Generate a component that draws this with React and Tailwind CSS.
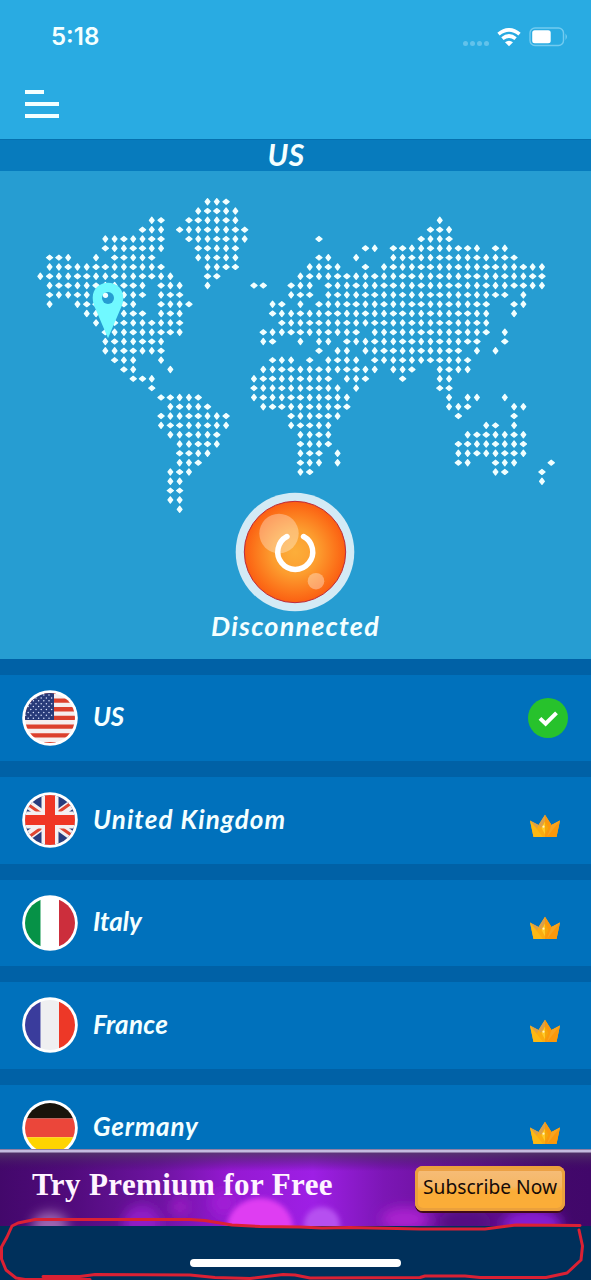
import React from "react";

// Each row lists the columns, or spans of columns, that hold a dot.
const MAP_ROWS = [
  "18-20", "17-21", "12-13 16-21 43", "11-13 15-22 42-44", "7-13 16-22 30 41-44",
  "7-13 17-21 35-36 38-47 49-50", "1-3 6 8-12 17-21 30-31 34 38-51",
  "1-13 18-21 29-32 35 37-54", "0-14 18-19 28-54", "1-11 13-15 18 23-24 27-29 31-54",
  "1-11 13-15 27-29 31-50 52", "1 4-10 13-16 25-26 28 30-48 51-52",
  "5-11 13-15 25-48 51", "6-15 26-48", "7-15 24-34 36-48 50",
  "7-13 24-25 28 30-31 33-47 50", "7-13 30 32-33 35-45 47 49",
  "8-10 13 25-27 29 31-34 36-46", "9-10 14 24-36 38-40 43-46",
  "10-12 23-31 33-35 39 43-44", "12 23-32 34 43-44", "13-17 23-33 44 46-47 50",
  "14-18 24-33 44-46 51-52", "13-20 27-32 45 51", "13-20 27-31 48-49 51",
  "14-19 28-31 46-52", "15-19 28-31 45-52", "15-18 28-30 32 45-52",
  "15-17 28-30 32 45-46 49-51 55", "14-16 28-29 49-50 54", "14-15 54", "14-15", "14-15", "15",
];

function dotPath() {
  let d = "";
  MAP_ROWS.forEach((row, r) => {
    row.split(" ").forEach((span) => {
      const [a, b = a] = span.split("-").map(Number);
      for (let c = a; c <= b; c++) {
        const x = (40.3 + c * 9.29).toFixed(2);
        const y = 30.7 + r * 9.32;
        const wide = (c * 5 + r * 3) % 7 < 3;
        d += wide
          ? `M${x} ${(y - 2.5).toFixed(2)}l3.1 2.5-3.1 2.5-3.1-2.5z`
          : `M${x} ${(y - 3.1).toFixed(2)}l2.4 3.1-2.4 3.1-2.4-3.1z`;
      }
    });
  });
  return d;
}

function WorldMap() {
  return (
    <svg className="block h-[488px] w-full" viewBox="0 0 591 488" aria-hidden="true">
      <path d={dotPath()} fill="#f1ffff" stroke="#f1ffff" strokeWidth="1.200" strokeLinejoin="round" />
      <path
        d="M108 111.800c-9 0-15.300 6.500-15.300 15 0 5 1.500 8.500 3.300 12.200L108 167.300 120 139c1.800-3.700 3.300-7.200 3.300-12.200 0-8.500-6.300-15-15.300-15z"
        fill="#70f9ff"
      />
      <circle cx="108" cy="127" r="6" fill="#269dd2" />
      <circle cx="105.500" cy="124.300" r="2.600" fill="#f1ffff" />
    </svg>
  );
}

function PowerButton() {
  return (
    <svg className="mr-px" width="120" height="120" viewBox="0 0 120 120" aria-hidden="true">
      <defs>
        <radialGradient id="orb">
          <stop offset="0" stopColor="#fcae3a" />
          <stop offset="0.45" stopColor="#fc9d2f" />
          <stop offset="0.8" stopColor="#fc761b" />
          <stop offset="1" stopColor="#fb5f12" />
        </radialGradient>
      </defs>
      <circle cx="60" cy="60" r="59.300" fill="#d3eaf5" />
      <circle cx="60" cy="60" r="50.700" fill="url(#orb)" stroke="#bb2c3e" strokeWidth="1" />
      <circle cx="44" cy="41.500" r="19.700" fill="#fff" fillOpacity="0.32" />
      <circle cx="81" cy="89.200" r="8.300" fill="#fff" fillOpacity="0.35" />
      <path d="M52 44.500a17.500 17.500 0 1 0 16.500 0" fill="none" stroke="#fff" strokeWidth="5.400" strokeLinecap="round" />
    </svg>
  );
}

function UsFlag() {
  const stars = [];
  for (let r = 0; r < 9; r++) {
    for (let c = 0; c < 6; c++) {
      stars.push(<circle key={`${r}-${c}`} cx={1 + c * 5.2 + (r % 2) * 2.6} cy={5 + r * 2.9} r="0.75" fill="#dbe4ff" />);
    }
  }
  return (
    <>
      <path d="M0 0h56v56H0z" fill="#f6eeee" />
      {[0, 1, 2, 3, 4, 5, 6].map((i) => (
        <path key={i} d={`M0 ${-0.3 + i * 8.7}h56v4.300H0z`} fill="#dc402d" />
      ))}
      <path d="M0 0h32v30H0z" fill="#283b79" />
      {stars}
    </>
  );
}

function UkFlag() {
  return (
    <>
      <path d="M0 0h56v56H0z" fill="#293d7d" />
      <path d="M-6 3.500 62 52.500M-6 52.500 62 3.500" stroke="#f4eff0" strokeWidth="9" />
      <path d="M27 30.500 4 47M29 25.500 52 9M28 28 4 11M28 28 52 45" stroke="#df4430" strokeWidth="3" />
      <path d="M28 0v56M0 28h56" stroke="#f4eff0" strokeWidth="17" />
      <path d="M28 0v56M0 28h56" stroke="#f03624" strokeWidth="10" />
    </>
  );
}

function Flag({ country }) {
  const clip = `clip-${country.replace(/\s/g, "")}`;
  return (
    <svg className="shrink-0" width="56" height="56" viewBox="0 0 56 56" aria-hidden="true">
      <defs>
        <clipPath id={clip}><circle cx="28" cy="28" r="25" /></clipPath>
      </defs>
      <circle cx="28" cy="28" r="27.800" fill="#fff" />
      <g clipPath={`url(#${clip})`}>
        {country === "US" && <UsFlag />}
        {country === "United Kingdom" && <UkFlag />}
        {country === "Italy" && (
          <>
            <path d="M0 0h18.700v56H0z" fill="#069247" />
            <path d="M18.700 0H37v56H18.700z" fill="#fff" />
            <path d="M37 0h19v56H37z" fill="#cc2e3c" />
          </>
        )}
        {country === "France" && (
          <>
            <path d="M0 0h18.700v56H0z" fill="#3a3c9c" />
            <path d="M18.700 0H37v56H18.700z" fill="#efeff1" />
            <path d="M37 0h19v56H37z" fill="#ed3827" />
          </>
        )}
        {country === "Germany" && (
          <>
            <path d="M0 0h56v18.400H0z" fill="#18140b" />
            <path d="M0 18.400h56v18.800H0z" fill="#eb463a" />
            <path d="M0 37.200h56V56H0z" fill="#ffd400" />
          </>
        )}
      </g>
    </svg>
  );
}

function Crown() {
  return (
    <svg className="mr-[6px] mt-[11px]" width="32" height="24" viewBox="0 0 32 24" aria-hidden="true">
      <path d="M1 6.500 9.500 11 16 .8 22.500 11 31 6.500 27.500 23h-23z" fill="#fbac10" />
      <path d="M1 6.500 14 23H4.500z" fill="#fdb913" />
      <path d="M16 .8 22.500 11 31 6.500 27.500 23H16z" fill="#fb980b" />
      <path d="M1 6.500 9.500 11 8 14.500zM9.500 11 16 .8V7l-4 7z" fill="#dba04a" />
      <path d="M31 6.500 18 23l4.500-12z" fill="#f6a421" />
      <path d="M16 7.500 19.500 14 16 20.500 12.500 14z" fill="#f5a60b" />
      <path d="M16 7.500V20.500L12.500 14z" fill="#ffc928" />
      <circle cx="14.500" cy="12.700" r="1.100" fill="#fff2c4" />
    </svg>
  );
}

function Check() {
  return (
    <svg className="-mr-px" width="40" height="40" viewBox="0 0 40 40" aria-hidden="true">
      <circle cx="20" cy="20" r="20" fill="#27c22c" />
      <path d="m12 20.400 5.600 5.300L28.500 14.800" fill="none" stroke="#fff" strokeWidth="4" />
    </svg>
  );
}

const SERVERS = [
  { name: "US", track: "tracking-[-0.2px]" },
  { name: "United Kingdom", track: "tracking-[1.1px]" },
  { name: "Italy", track: "tracking-[0px]" },
  { name: "France", track: "tracking-[0.35px]" },
  { name: "Germany", track: "tracking-[0.8px]" },
];

export default function App() {
  return (
    <div className="relative flex h-[1280px] w-[591px] flex-col overflow-hidden bg-[#0061a6] font-['Lato',sans-serif] text-[#f4ffff]">
      <header className="h-[139px] shrink-0 bg-[#29abe2]">
        <div className="flex h-[74px] items-center justify-between pl-[51px] pr-[23px]">
          <time className="font-['Inter',sans-serif] text-[24px] font-semibold leading-none tracking-[0px]">5:18</time>
          <div className="flex items-center">
            <div className="mr-2 mt-3 flex gap-[2px]">
              <i className="h-[5px] w-[5px] rounded-full bg-[#62c2eb]" />
              <i className="h-[5px] w-[5px] rounded-full bg-[#62c2eb]" />
              <i className="h-[5px] w-[5px] rounded-full bg-[#62c2eb]" />
              <i className="h-[5px] w-[5px] rounded-full bg-[#62c2eb]" />
            </div>
            <svg className="mr-[8px]" width="24" height="19" viewBox="0 0 24 19" aria-hidden="true">
              <path d="M1.500 6.100q10.500-8.400 21 0M5.400 10.600q6.600-5.200 13.200 0" fill="none" stroke="#fff" strokeWidth="3.700" />
              <path d="M8 14.300q4-3.200 8 0L12 18.300z" fill="#fff" />
            </svg>
            <svg width="39" height="20" viewBox="0 0 39 20" aria-hidden="true">
              <rect x="1" y="1" width="33.500" height="17.500" rx="5" fill="none" stroke="#72cbf0" strokeWidth="1.400" />
              <rect x="3.200" y="3.300" width="18.500" height="13" rx="2.500" fill="#fff" />
              <path d="M36.500 6.500q3 3.300 0 6.500z" fill="#72cbf0" />
            </svg>
          </div>
        </div>
        <button className="ml-[25px] mt-[15px] flex w-[34px] flex-col gap-2 py-px" aria-label="Menu">
          <span className="block h-[4px] w-[19px] bg-[#f4ffff]" />
          <span className="block h-[4px] w-full bg-[#f4ffff]" />
          <span className="block h-[4px] w-full bg-[#f4ffff]" />
        </button>
      </header>

      <div className="flex h-8 shrink-0 items-start justify-center border-t border-[#0571ae] bg-[#077bbd] pr-[19px]">
        <h1 className="-mt-[2px] text-[30px] font-bold italic leading-8 tracking-[0.5px]">US</h1>
      </div>

      <section className="relative h-[488px] shrink-0 bg-[#269dd2]">
        <WorldMap />
        <div className="absolute left-0 top-[321px] flex w-full flex-col items-center">
          <PowerButton />
          <p className="-mt-px text-[27px] font-bold italic leading-[30px] tracking-[1.200px]">Disconnected</p>
        </div>
      </section>

      <main className="flex h-[490px] shrink-0 flex-col gap-4 overflow-hidden pt-[15.500px]">
        {SERVERS.map(({ name, track }) => (
          <div key={name} className="flex h-[86.500px] shrink-0 items-center bg-[#0071bc] pl-[22px] pr-6">
            <Flag country={name} />
            <span className={`-mt-[3px] ml-[15px] flex-1 text-[26px] font-bold italic leading-none ${track}`}>{name}</span>
            {name === "US" ? <Check /> : <Crown />}
          </div>
        ))}
      </main>

      <aside className="relative flex h-[77px] shrink-0 items-center justify-between overflow-hidden bg-[linear-gradient(90deg,#43086b_0%,#510b7c_12%,#6d14a0_27%,#9519d2_39%,#9e1fe5_53%,#7c16b5_65%,#650f91_80%,#43086b_93%,#41076a_100%)] pl-8 pr-[26px]">
        <svg className="absolute inset-0" width="591" height="77" aria-hidden="true">
          <defs>
            <filter id="soft"><feGaussianBlur stdDeviation="6" /></filter>
            <filter id="haze"><feGaussianBlur stdDeviation="2.500" /></filter>
            <linearGradient id="shade" x2="0" y2="1">
              <stop stopColor="#574468" /><stop offset="1" stopColor="#3d0960" stopOpacity="0" />
            </linearGradient>
          </defs>
          <g filter="url(#soft)">
            <circle cx="142" cy="75" r="19" fill="#911ac5" />
            <circle cx="224" cy="54" r="13" fill="#a11bd5" />
            <circle cx="180" cy="58" r="8" fill="#a01fc4" />
            <ellipse cx="50" cy="77" rx="18" ry="14" fill="#9d65b0" />
            <ellipse cx="405" cy="70" rx="24" ry="12" fill="#aa20cf" />
            <ellipse cx="465" cy="74" rx="26" ry="15" fill="#540b82" />
            <ellipse cx="532" cy="75" rx="30" ry="16" fill="#871bd0" />
          </g>
          <g filter="url(#haze)">
            <ellipse cx="260" cy="79" rx="33" ry="30" fill="#df3cf2" />
            <circle cx="322" cy="76" r="18" fill="#b64ff0" />
          </g>
          <rect width="591" height="22" fill="url(#shade)" />
          <rect width="591" height="3" y="0.500" fill="#c5bbdf" />
        </svg>
        <h2 className="relative -mt-[6px] whitespace-nowrap font-['Liberation_Serif',serif] text-[31px] font-bold leading-none tracking-[0.4px] text-[#fff4ff]">Try Premium for Free</h2>
        <button className="relative mt-[2px] flex h-[45px] w-[150px] items-center justify-center whitespace-nowrap rounded-[8px] bg-[linear-gradient(#eca145_0_5px,#f6bc76_5px,#f5b765_20px,#fbad38_25px,#fbad38_100%)] pb-1 font-['Noto_Sans',sans-serif] text-[19.200px] leading-none text-[#160b08] shadow-[0_2px_0_#410b18,inset_0_0_0_3px_#eba03c]">
          Subscribe Now
        </button>
      </aside>

      <footer className="flex h-[54px] shrink-0 items-end justify-center bg-[#00305b] pb-[13px]">
        <div className="h-2 w-[211px] rounded-full bg-white" />
      </footer>

      <svg className="absolute bottom-0 left-0" width="591" height="68" viewBox="0 1212 591 68" fill="none" stroke="#db2134" strokeWidth="3" strokeLinecap="round" strokeLinejoin="round" aria-hidden="true">
        <path d="M580 1225.500 516 1225 485 1229 420 1229 350 1227.500 322 1228 300 1227 260 1226.500 232 1225 205 1220.500 190 1219.500 35 1219.500 18 1223 12 1226 7 1237 1.500 1247 1.500 1259 6 1270 16 1278 25 1279.500 90 1279.500" />
        <path d="M43 1276.500 80 1276.500 95 1274.500 190 1275 215 1277.500 250 1278.500 283 1274.500 295 1275 310 1278 420 1277.500 425 1276 465 1276 480 1277.500 546 1277.500 567 1273 581 1260 582.500 1246 579 1230" />
      </svg>
    </div>
  );
}
